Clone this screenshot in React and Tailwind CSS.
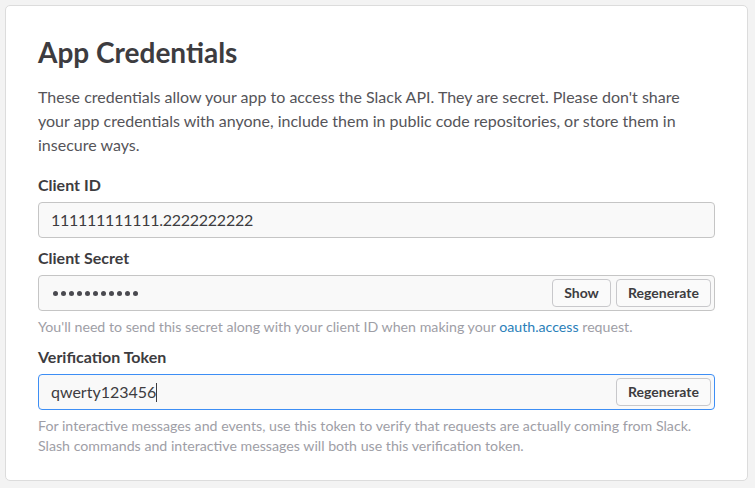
import React from "react";

const font = { fontFamily: "Lato, 'Noto Sans', sans-serif" };

const Btn = ({ children, w }) => (
  <button
    className={
      "h-[28px] rounded-[4px] border border-[#c8c8cb] bg-[#fafafa] text-[14px] font-bold text-[#3d3c40] leading-none " +
      w
    }
  >
    {children}
  </button>
);

const Field = ({ focused, children, actions }) => (
  <div
    className={
      "flex items-center h-[36px] rounded-[4px] border bg-[#f9f9f9] pl-[12px] pr-[3px] " +
      (focused ? "border-[#3d8ef5]" : "border-[#c5c5c5]")
    }
  >
    <div className="flex-1 flex items-center text-[16px] text-[#3d3c40]">{children}</div>
    {actions && <div className="flex gap-[5px]">{actions}</div>}
  </div>
);

const Label = ({ children, className }) => (
  <div className={"text-[16px] leading-[20px] font-bold text-[#3d3c40] " + className}>{children}</div>
);

export default function App() {
  return (
    <div className="min-h-screen bg-[#f3f3f3] p-[5px]" style={font}>
      <div className="w-[743px] h-[476px] bg-white border border-[#dcdcdc] rounded-[5px] px-[32px] pt-[29px]">
        <h1 className="text-[28px] leading-[34px] font-bold text-[#3d3c40]">App Credentials</h1>
        <p className="mt-[16px] pr-[10px] text-[16px] leading-[24px] text-[#555459]">
          These credentials allow your app to access the Slack API. They are secret. Please don't share
          your app credentials with anyone, include them in public code repositories, or store them in
          insecure ways.
        </p>

        <Label className="mt-[18px]">Client ID</Label>
        <div className="mt-[7px]">
          <Field>
            <span className="tracking-[-0.26px]">111111111111.2222222222</span>
          </Field>
        </div>

        <Label className="mt-[10px]">Client Secret</Label>
        <div className="mt-[7px]">
          <Field
            actions={[
              <Btn key="s" w="w-[59px]">Show</Btn>,
              <Btn key="r" w="w-[95px]">Regenerate</Btn>,
            ]}
          >
            <div className="flex gap-[3px] pl-[2px]">
              {Array.from({ length: 11 }).map((_, i) => (
                <span key={i} className="w-[5px] h-[5px] rounded-full bg-[#4a4a50]" />
              ))}
            </div>
          </Field>
        </div>
        <p className="mt-[6px] text-[14.2px] leading-[20px] text-[#9e9ea6]">
          You'll need to send this secret along with your client ID when making your{" "}
          <a className="text-[#2a80b9]">oauth.access</a> request.
        </p>

        <Label className="mt-[10px]">Verification Token</Label>
        <div className="mt-[7px]">
          <Field focused actions={[<Btn key="r" w="w-[95px]">Regenerate</Btn>]}>
            qwerty123456
            <span className="inline-block w-px h-[19px] bg-[#3d3c40]" />
          </Field>
        </div>
        <p className="mt-[6px] text-[14.2px] leading-[20px] text-[#9e9ea6]">
          For interactive messages and events, use this token to verify that requests are actually coming from Slack.
          <br />
          Slash commands and interactive messages will both use this verification token.
        </p>
      </div>
    </div>
  );
}
